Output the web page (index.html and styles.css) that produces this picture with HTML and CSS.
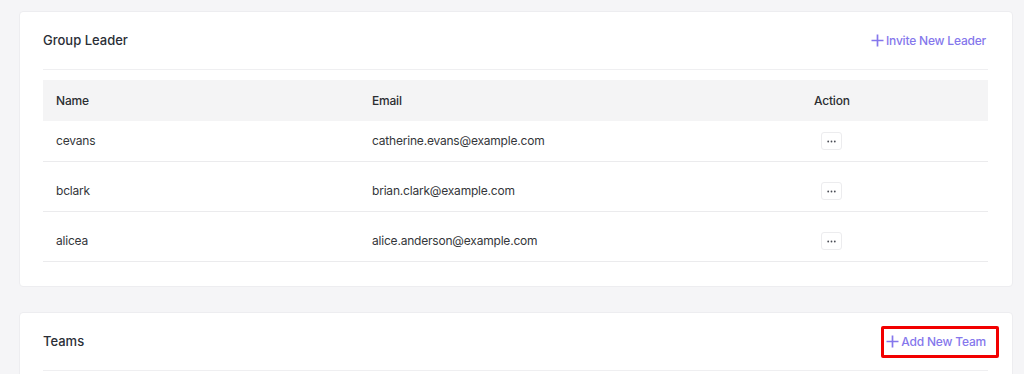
FILE: index.html
```html
<!DOCTYPE html>
<html lang="en">

<head>
  <meta charset="UTF-8">
  <meta name="viewport" content="width=device-width, initial-scale=1.0">
  <title>Group Leader</title>
  <link rel="stylesheet" href="styles.css">
</head>

<body>
  <div class="page">

    <div class="card">
      <div class="card-head">
        <h2>Group Leader</h2>
        <a href="#" class="add-link">
          <svg width="13" height="13" viewBox="0 0 13 13"><path d="M6.5 0.5v12M0.5 6.5h12" stroke="currentColor" stroke-width="1.7" fill="none" /></svg>
          Invite New Leader
        </a>
      </div>

      <table class="tbl">
        <thead>
          <tr>
            <th class="c-name">Name</th>
            <th class="c-email">Email</th>
            <th class="c-action">Action</th>
          </tr>
        </thead>
        <tbody>
          <tr>
            <td>cevans</td>
            <td>catherine.evans@example.com</td>
            <td><button class="dots"><svg width="9" height="3" viewBox="0 0 9 3"><circle cx="1.2" cy="1.5" r="0.9" /><circle cx="4.5" cy="1.5" r="0.9" /><circle cx="7.8" cy="1.5" r="0.9" /></svg></button></td>
          </tr>
          <tr>
            <td>bclark</td>
            <td>brian.clark@example.com</td>
            <td><button class="dots"><svg width="9" height="3" viewBox="0 0 9 3"><circle cx="1.2" cy="1.5" r="0.9" /><circle cx="4.5" cy="1.5" r="0.9" /><circle cx="7.8" cy="1.5" r="0.9" /></svg></button></td>
          </tr>
          <tr>
            <td>alicea</td>
            <td>alice.anderson@example.com</td>
            <td><button class="dots"><svg width="9" height="3" viewBox="0 0 9 3"><circle cx="1.2" cy="1.5" r="0.9" /><circle cx="4.5" cy="1.5" r="0.9" /><circle cx="7.8" cy="1.5" r="0.9" /></svg></button></td>
          </tr>
        </tbody>
      </table>
    </div>

    <div class="card">
      <div class="card-head">
        <h2>Teams</h2>
        <a href="#" class="add-link marked">
          <svg width="13" height="13" viewBox="0 0 13 13"><path d="M6.5 0.5v12M0.5 6.5h12" stroke="currentColor" stroke-width="1.7" fill="none" /></svg>
          Add New Team
        </a>
      </div>
    </div>

  </div>
</body>

</html>
```

FILE: styles.css
```css
html,
body {
  margin: 0;
  background: #f5f5f7;
  font-family: Inter, "Noto Sans", sans-serif;
  color: #2f3237;
}

.page {
  padding: 11px 11px 0 19px;
  display: flex;
  flex-direction: column;
  gap: 25px;
}

.card {
  background: #fff;
  border: 1px solid #ededf0;
  border-radius: 4px;
  padding: 0 24px 24px 23px;
}

.card-head {
  height: 57px;
  display: flex;
  align-items: center;
  justify-content: space-between;
  border-bottom: 1px solid #efeff1;
}

.card-head h2 {
  margin: -1px 0 0;
  font-size: 13px;
  font-weight: 500;
  color: #2a2e36;
}

.add-link {
  display: flex;
  align-items: center;
  gap: 2px;
  margin: -1px 2px 0 0;
  font-size: 12px;
  font-weight: 500;
  letter-spacing: -0.2px;
  color: #8577ec;
  text-decoration: none;
}

.marked {
  position: relative;
}

.marked::after {
  content: "";
  position: absolute;
  left: -5px;
  right: -13px;
  top: -8px;
  bottom: -9px;
  border: 3px solid #f20000;
  border-radius: 2px;
}

.tbl {
  width: 100%;
  margin-top: 10px;
  border-collapse: collapse;
  font-size: 12px;
  letter-spacing: -0.2px;
}

.tbl th {
  height: 41px;
  padding: 0 13px;
  background: #f4f4f5;
  text-align: left;
  font-weight: 500;
  color: #2b2d31;
}

.c-name {
  width: 290px;
}

.c-email {
  width: 416px;
}

.tbl td {
  padding: 12px 13px;
  line-height: 16px;
  color: #34363a;
  border-bottom: 1px solid #ebebed;
}

.tbl tbody tr + tr td {
  padding-top: 21px;
}

.dots {
  display: flex;
  align-items: center;
  justify-content: center;
  width: 21px;
  height: 18px;
  margin: -1px 0 -1px 7px;
  padding: 0;
  background: #fff;
  border: 1px solid #ececee;
  border-radius: 3px;
  fill: #4a4d55;
}
```
